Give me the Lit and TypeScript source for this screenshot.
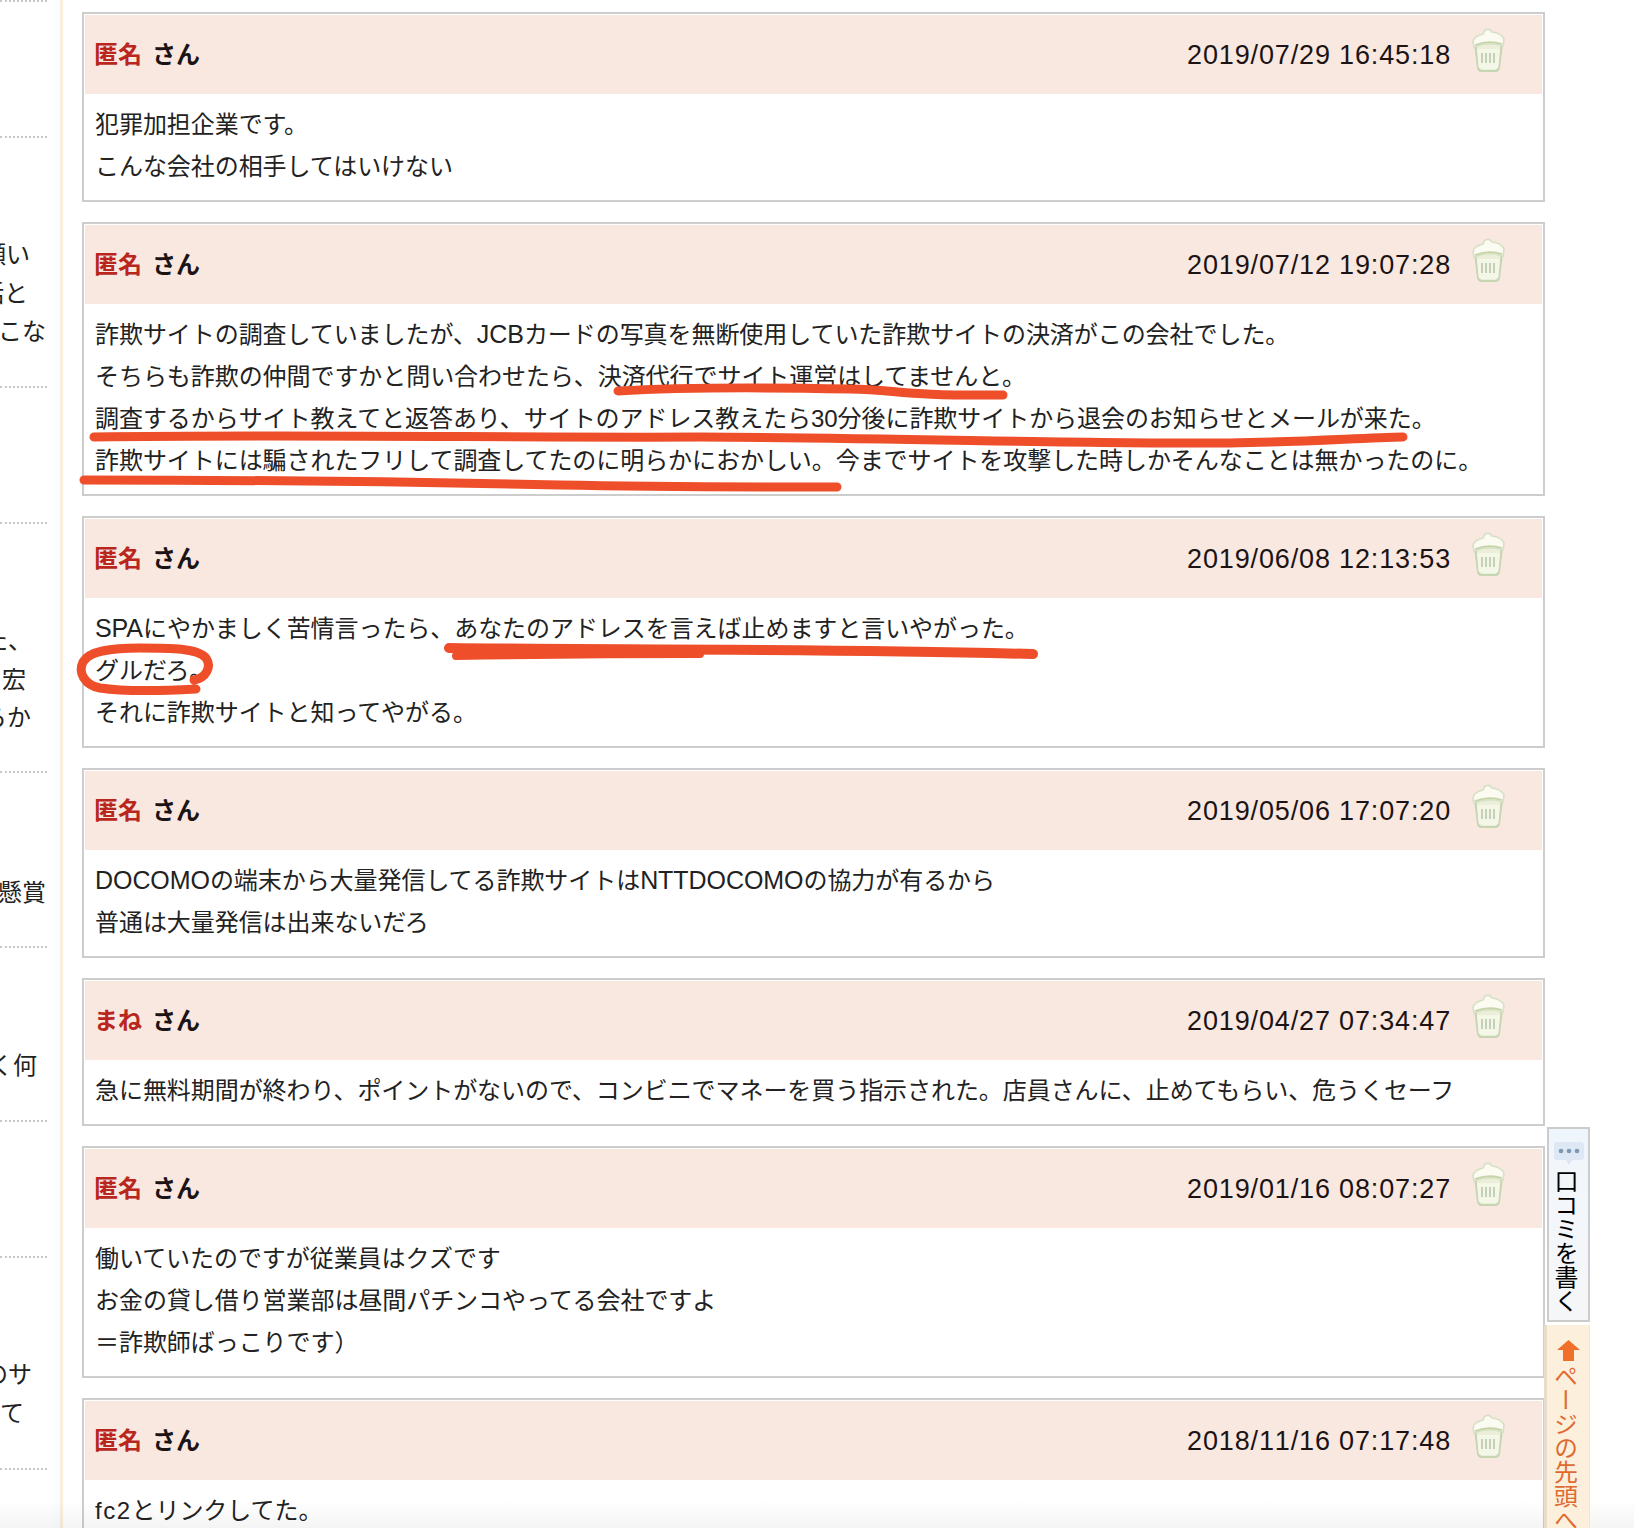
import { LitElement, html, css, svg } from "lit";
import { customElement } from "lit/decorators.js";

const reviews = [
  { name: "匿名", date: "2019/07/29 16:45:18", lines: ["犯罪加担企業です。", "こんな会社の相手してはいけない"] },
  { name: "匿名", date: "2019/07/12 19:07:28", lines: [
    "詐欺サイトの調査していましたが、JCBカードの写真を無断使用していた詐欺サイトの決済がこの会社でした。",
    "そちらも詐欺の仲間ですかと問い合わせたら、決済代行でサイト運営はしてませんと。",
    "調査するからサイト教えてと返答あり、サイトのアドレス教えたら30分後に詐欺サイトから退会のお知らせとメールが来た。",
    "詐欺サイトには騙されたフリして調査してたのに明らかにおかしい。今までサイトを攻撃した時しかそんなことは無かったのに。",
  ] },
  { name: "匿名", date: "2019/06/08 12:13:53", lines: [
    "SPAにやかましく苦情言ったら、あなたのアドレスを言えば止めますと言いやがった。",
    "グルだろ。",
    "それに詐欺サイトと知ってやがる。",
  ] },
  { name: "匿名", date: "2019/05/06 17:07:20", lines: [
    "DOCOMOの端末から大量発信してる詐欺サイトはNTTDOCOMOの協力が有るから",
    "普通は大量発信は出来ないだろ",
  ] },
  { name: "まね", date: "2019/04/27 07:34:47", lines: [
    "急に無料期間が終わり、ポイントがないので、コンビニでマネーを買う指示された。店員さんに、止めてもらい、危うくセーフ",
  ] },
  { name: "匿名", date: "2019/01/16 08:07:27", lines: [
    "働いていたのですが従業員はクズです",
    "お金の貸し借り営業部は昼間パチンコやってる会社ですよ",
    "＝詐欺師ばっこりです）",
  ] },
  { name: "匿名", date: "2018/11/16 07:17:48", lines: ["fc2とリンクしてた。"] },
];

const sideSections = [
  { h: 2, pad: 0, lines: [] },
  { h: 136, pad: 0, lines: [] },
  { h: 250, pad: 98, lines: [{ t: "願い", end: 30 }, { t: "話と", end: 28 }, { t: "こな", end: 46 }] },
  { h: 136, pad: 0, lines: [] },
  { h: 249, pad: 98, lines: [{ t: "た、", end: 32 }, { t: "宏", end: 26 }, { t: "らか", end: 31 }] },
  { h: 175, pad: 101, lines: [{ t: "懸賞", end: 46 }] },
  { h: 174, pad: 99, lines: [{ t: "く何", end: 37 }] },
  { h: 136, pad: 0, lines: [] },
  { h: 212, pad: 98, lines: [{ t: "のサ", end: 32 }, { t: "て", end: 24 }] },
];

const trash = svg`
  <svg class="trash" viewBox="0 0 34 44" aria-hidden="true">
    <path d="M4 14 L7 39 Q7.500 43 11 43 L24 43 Q27.500 43 28 39 L31 15 Z" fill="#ebefd9" stroke="#c6d5b2" stroke-width="2.200"/>
    <path d="M2 14 Q3 8 12 6 L14 2 Q19 0 21 4 Q30 5 33 11 L32 18 Q18 13 3 19 Z" fill="#fbfbf2" stroke="#d5e0c4" stroke-width="1.600"/>
    <path d="M4 17 Q18 12 31 16" fill="none" stroke="#c4d4a6" stroke-width="1.800"/>
    <path d="M6 21 H29 L27.500 39 Q27 41 24 41 H11 Q8 41 7.500 39 Z" fill="#f4f6e8"/>
    <path d="M11 25 V35 M15 25 V35 M19 25 V35 M23 25 V35" stroke="#b9c8aa" stroke-width="1.600"/>
  </svg>`;

const LATIN = /([A-Z]{3,}|fc2)/;

function richLine(text: string) {
  return text.split(LATIN).map((part) => {
    if (part === "fc2") return html`<span class="lat-wide">${part}</span>`;
    if (/^[A-Z]{3,}$/.test(part)) return html`<span class="lat">${part}</span>`;
    return part;
  });
}

@customElement("app-root")
export class AppRoot extends LitElement {
  static styles = css`
    :host {
      display: block;
      position: relative;
      width: 1634px;
      height: 1528px;
      overflow: hidden;
      background: #fff;
      font-family: "Liberation Sans", "Noto Sans CJK JP", sans-serif;
      font-size: 24px;
      color: #222;
    }
    .page { display: flex; height: 100%; }
    .side {
      width: 60px;
      flex: none;
      overflow: hidden;
      background: linear-gradient(90deg, #fff 0, #fff 46px, #f9fdff 60px);
    }
    .sec {
      width: 47px;
      box-sizing: border-box;
      border-bottom: 2px dotted #c8c8c8;
    }
    .sl {
      display: flex;
      justify-content: flex-end;
      white-space: nowrap;
      line-height: 38.5px;
    }
    .stripe { width: 3px; flex: none; background: #fbeeda; }
    .main { flex: 1; padding: 12px 0 0 19px; display: flex; flex-direction: column; gap: 20px; min-width: 0; }
    .card {
      width: 1463px;
      flex: none;
      box-sizing: border-box;
      border: 2px solid #cdcdcd;
      padding: 1px;
      background: #fff;
    }
    .head {
      height: 79px;
      display: flex;
      align-items: center;
      background: #f9e8df;
      padding: 0 37px 0 9px;
      color: #1c1414;
    }
    .name { font-weight: 700; color: #b8261e; margin-bottom: 4px; }
    .san { font-weight: 700; margin-left: 10px; margin-bottom: 4px; }
    .date { margin-left: auto; margin-top: 2px; font-size: 27px; letter-spacing: 0.85px; font-kerning: none; }
    .trash { width: 34px; height: 44px; margin: 0 0 10px 20px; flex: none; }
    .body { padding: 10px 10px 11px 10px; }
    .line { line-height: 42px; white-space: nowrap; letter-spacing: -0.06px; }
    .lat { font-size: 25px; line-height: 0; }
    .lat-wide { letter-spacing: 1.5px; }
    .tabs {
      position: absolute;
      left: 1544px;
      top: 1127px;
      width: 46px;
      display: flex;
      flex-direction: column;
      align-items: flex-end;
    }
    .tab-write {
      width: 43px;
      height: 195px;
      box-sizing: border-box;
      border: 2px solid #cccccc;
      background: linear-gradient(180deg, #eef5fc 0, #f2f6fb 40px, #f5f6f8 100%);
      display: flex;
      flex-direction: column;
      align-items: center;
      padding-top: 13px;
      color: #000;
    }
    .bubble { width: 30px; height: 24px; flex: none; }
    .vtext { writing-mode: vertical-rl; line-height: 39px; white-space: nowrap; margin-right: 8px; }
    .tab-write .vtext { margin-top: 3px; }
    .tab-top {
      width: 46px;
      height: 210px;
      margin-top: 3px;
      box-sizing: border-box;
      border-left: 3px solid #e8dccb;
      border-right: 1px solid #f1e4d2;
      background: #fcf0dc;
      display: flex;
      flex-direction: column;
      align-items: center;
      padding-top: 15px;
      color: #df6a2f;
      overflow: hidden;
    }
    .arrow { width: 23px; height: 21px; flex: none; }
    .tab-top .vtext { margin-top: 3px; }
    .ink { position: absolute; inset: 0; width: 100%; height: 100%; pointer-events: none; }
    .fade {
      position: absolute;
      left: 0; right: 0; bottom: 0;
      height: 28px;
      background: linear-gradient(180deg, rgba(0,0,0,0), rgba(0,0,0,.045));
      pointer-events: none;
    }
  `;

  render() {
    return html`
      <div class="page">
        <div class="side">
          ${sideSections.map(
            (s) => html`<div class="sec" style="height:${s.h}px;padding-top:${s.pad}px">
              ${s.lines.map((l) => html`<div class="sl" style="width:${l.end}px">${l.t}</div>`)}
            </div>`
          )}
        </div>
        <div class="stripe"></div>
        <div class="main">
          ${reviews.map(
            (r) => html`<section class="card">
              <div class="head">
                <span class="name">${r.name}</span><span class="san">さん</span>
                <span class="date">${r.date}</span>
                ${trash}
              </div>
              <div class="body">${r.lines.map((l) => html`<div class="line">${richLine(l)}</div>`)}</div>
            </section>`
          )}
        </div>
      </div>
      <div class="fade"></div>
      <svg class="ink" viewBox="0 0 1634 1528" fill="none" stroke="#ee4f2a" stroke-linecap="round" stroke-linejoin="round">
        <path stroke-width="9" d="M618 391 C700 386 800 388 850 389 S900 396 1003 395" />
        <path stroke-width="9" d="M94 437 C300 434 520 438 700 437 C900 438 1100 444 1230 443 C1300 442 1360 438 1403 437" />
        <path stroke-width="9" d="M84 480 C250 480 420 482 560 485 C660 487 760 487 837 487" />
        <path stroke-width="10" d="M449 648 C600 650 800 648 1033 654" />
        <path stroke-width="8" d="M456 656 C520 655 600 654 700 654" />
        <path stroke-width="9" d="M196 689 C160 691 120 691 100 688 C84 685 78 672 83 662 C89 651 110 648 140 648 C170 648 198 648 206 658 C212 667 206 678 194 680" />
      </svg>
      <div class="tabs">
        <div class="tab-write">
          <svg class="bubble" viewBox="0 0 30 24" aria-hidden="true">
            <path d="M3 0 H27 Q30 0 30 3 V15 Q30 18 27 18 H18 L15 23 L12 18 H3 Q0 18 0 15 V3 Q0 0 3 0 Z" fill="#dde8f4"/>
            <circle cx="7" cy="9" r="2.300" fill="#7f97b3"/>
            <circle cx="15" cy="9" r="2.300" fill="#7f97b3"/>
            <circle cx="23" cy="9" r="2.300" fill="#7f97b3"/>
          </svg>
          <span class="vtext">口コミを書く</span>
        </div>
        <div class="tab-top">
          <svg class="arrow" viewBox="0 0 23 21" aria-hidden="true">
            <path d="M11.500 0 L23 10 H17 V21 H6 V10 H0 Z" fill="#f0702a"/>
          </svg>
          <span class="vtext">ページの先頭へ</span>
        </div>
      </div>
    `;
  }
}
